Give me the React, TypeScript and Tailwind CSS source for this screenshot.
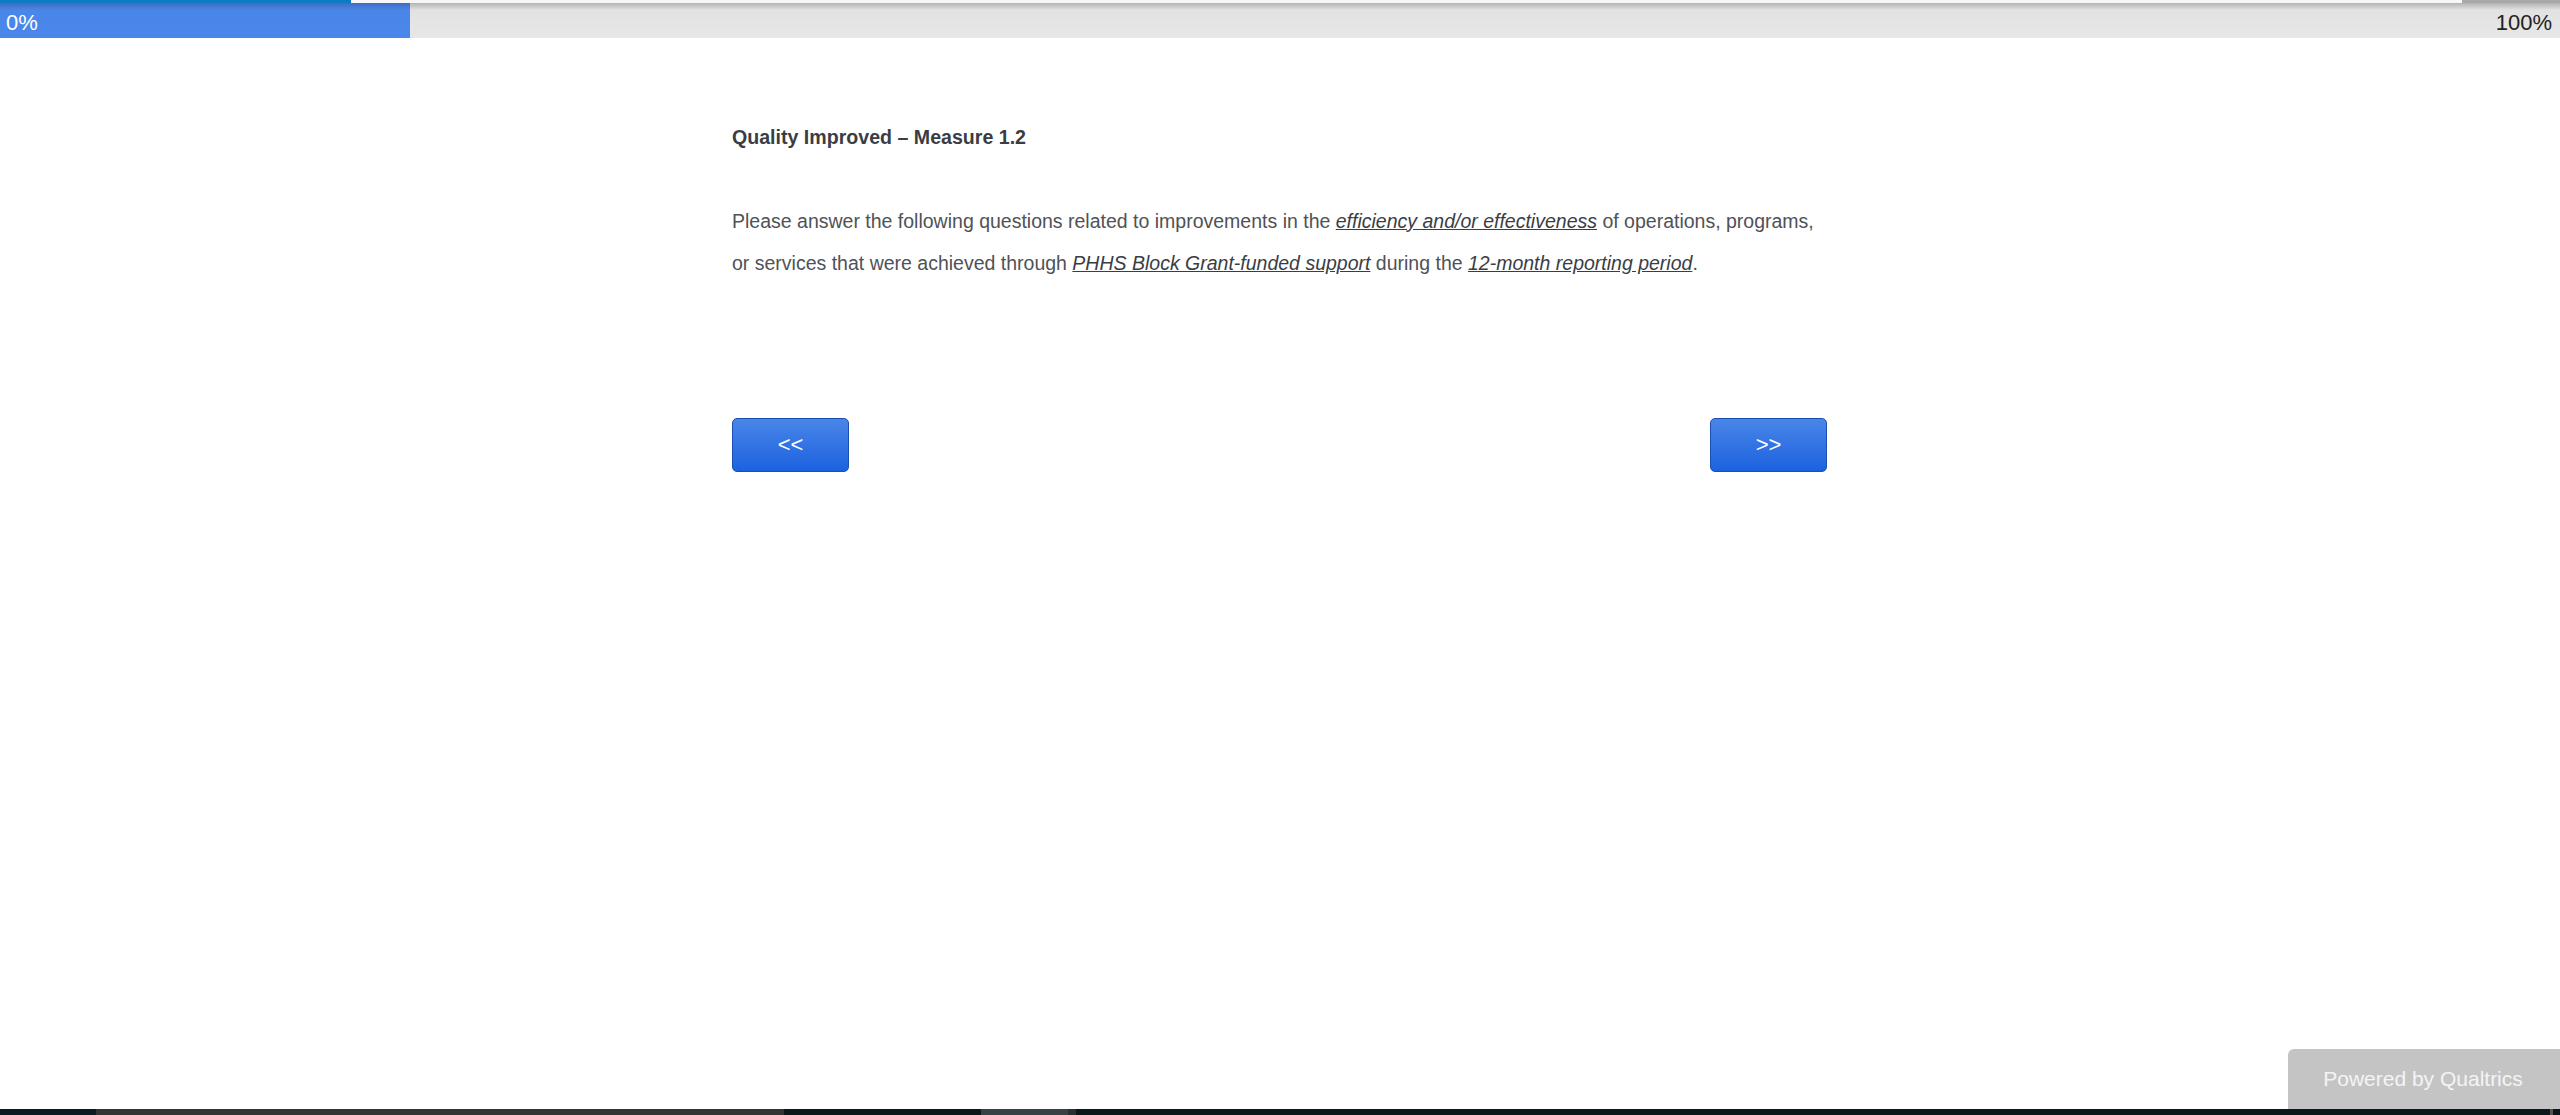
import React from "react";

export default function App() {
  const font = { fontFamily: '"Liberation Sans", Arial, sans-serif' };
  return (
    <div className="h-[1115px] w-full flex flex-col bg-white overflow-hidden" style={font}>
      {/* top strip */}
      <div className="flex h-[3px] shrink-0">
        <div className="w-[351px] bg-[#0a7bc4]" />
        <div className="flex-1 bg-[#f7f7f7]" />
        <div className="w-[98px] bg-[#a8a8a8]" />
      </div>
      {/* progress bar */}
      <div className="relative h-[35px] shrink-0 bg-[linear-gradient(to_bottom,#b3b3b3,#e2e2e2_7px,#e7e7e7)]">
        <div className="absolute left-0 top-0 h-full w-[410px] bg-[linear-gradient(to_bottom,#3c6cc0,#4a86e8_7px,#4a87eb)]" />
        <div className="relative flex h-full items-center justify-between pl-[6px] pr-[8px] pt-[4px] text-[22px] leading-none">
          <span className="text-white">0%</span>
          <span className="text-[#222222]">100%</span>
        </div>
      </div>
      {/* main */}
      <div className="flex-1">
        <div className="ml-[732px] w-[1095px] pt-[88px]">
          <div className="text-[19.6px] font-bold leading-[22.5px] text-[#3a3d44]">
            Quality Improved – Measure 1.2
          </div>
          <p className="mt-[51px] text-[19.5px] leading-[42.5px] text-[#4f5257]">
            Please answer the following questions related to improvements in the{" "}
            <span className="italic underline text-[#3a3d44]">efficiency and/or effectiveness</span> of operations, programs,
            <br />
            or services that were achieved through{" "}
            <span className="italic underline text-[#3a3d44]">PHHS Block Grant-funded support</span> during the{" "}
            <span className="italic underline text-[#3a3d44]">12-month reporting period</span>.
          </p>
          <div className="mt-[133px] flex justify-between">
            <button className="h-[54px] w-[117px] rounded-[5px] border border-[#1a4fb0] bg-[linear-gradient(to_bottom,#4a86e8,#1c62e0)] text-[22px] text-white">
              &lt;&lt;
            </button>
            <button className="h-[54px] w-[117px] rounded-[5px] border border-[#1a4fb0] bg-[linear-gradient(to_bottom,#4a86e8,#1c62e0)] text-[22px] text-white">
              &gt;&gt;
            </button>
          </div>
        </div>
      </div>
      {/* footer badge */}
      <div className="flex shrink-0 justify-end">
        <div className="flex h-[60px] w-[272px] items-center justify-center rounded-tl-[6px] bg-[#c4c4c5] pr-[2px] text-[21px] text-[#f4f4f4]">
          Powered by Qualtrics
        </div>
      </div>
      {/* bottom taskbar strip */}
      <div className="flex h-[6px] shrink-0">
        <div className="w-[96px] bg-[#0d1a1f]" />
        <div className="w-[688px] bg-[#333333]" />
        <div className="w-[197px] bg-[#0c171b]" />
        <div className="w-[87px] bg-[#384246]" />
        <div className="w-[8px] bg-[#2a2f31]" />
        <div className="flex-1 bg-[#0c171b]" />
        <div className="w-[3px] bg-[#555555]" />
        <div className="w-[7px] bg-[#0c171b]" />
      </div>
    </div>
  );
}
